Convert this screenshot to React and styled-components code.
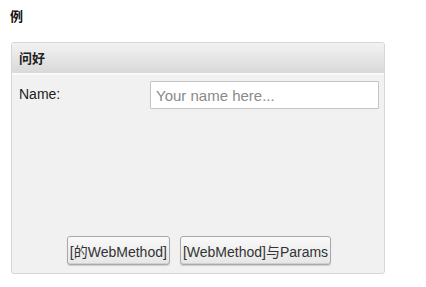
import styled, { createGlobalStyle } from 'styled-components';

const GlobalStyle = createGlobalStyle`
  body {
    margin: 0;
    background: #ffffff;
    font-family: "Liberation Sans", "Noto Sans CJK SC", sans-serif;
    color: #222;
  }
`;

const Page = styled.div`
  padding: 9px 41px 0 11px;
  width: 426px;
  box-sizing: border-box;
`;

const Title = styled.h4`
  margin: 0 0 17px -1px;
  font-size: 13px;
  font-weight: bold;
  line-height: 16px;
  color: #111;
`;

const Panel = styled.section`
  width: 374px;
  height: 232px;
  box-sizing: border-box;
  border: 1px solid #d6d6d6;
  border-radius: 3px;
  background: #f1f1f1;
  display: flex;
  flex-direction: column;
  overflow: hidden;
`;

const PanelHeader = styled.header`
  height: 29px;
  padding-left: 7px;
  padding-bottom: 1px;
  display: flex;
  align-items: center;
  font-size: 13px;
  font-weight: bold;
  color: #222;
  background: linear-gradient(#f2f2f2, #d9d9d9);
  border-bottom: 2px solid #fafafa;
`;

const PanelBody = styled.div`
  flex: 1;
  display: flex;
  flex-direction: column;
  padding: 6px 5px 8px 7px;
`;

const FieldRow = styled.div`
  display: flex;
  align-items: center;
`;

const Label = styled.label`
  width: 131px;
  font-size: 14px;
  color: #222;
  margin-top: -2px;
`;

const TextInput = styled.input`
  width: 229px;
  height: 28px;
  box-sizing: border-box;
  border: 1px solid #c4c4c4;
  border-radius: 1px;
  background: #fff;
  padding: 1px 5px 0;
  font-family: "Liberation Sans", sans-serif;
  font-size: 15px;
  outline: none;
  &::placeholder {
    color: #8a8a8a;
  }
`;

const Actions = styled.div`
  margin-top: auto;
  display: flex;
  justify-content: center;
  gap: 10px;
`;

const Button = styled.button`
  height: 29px;
  padding: 0 2px;
  border: 1px solid #a9a9a9;
  border-radius: 3px;
  background: linear-gradient(#f9f9f9, #e6e6e6);
  box-shadow: inset 0 -1px 0 #d0d0d0, 0 1px 1px rgba(0, 0, 0, 0.15);
  font-family: "Liberation Sans", "Noto Sans CJK SC", sans-serif;
  font-size: 14px;
  color: #333;
`;

export default function App() {
  return (
    <>
      <GlobalStyle />
      <Page>
        <Title>例</Title>
        <Panel>
          <PanelHeader>问好</PanelHeader>
          <PanelBody>
            <FieldRow>
              <Label>Name:</Label>
              <TextInput placeholder="Your name here..." />
            </FieldRow>
            <Actions>
              <Button>[的WebMethod]</Button>
              <Button>[WebMethod]与Params</Button>
            </Actions>
          </PanelBody>
        </Panel>
      </Page>
    </>
  );
}
